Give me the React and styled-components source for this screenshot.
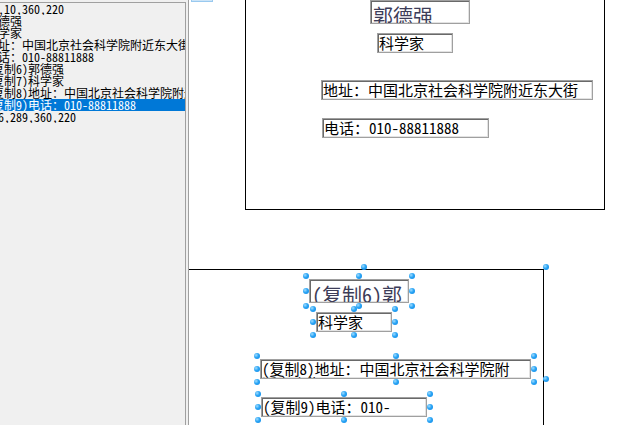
import React from 'react';
import styled, { createGlobalStyle } from 'styled-components';

const GlobalStyle = createGlobalStyle`
  html, body {
    margin: 0;
    padding: 0;
    height: 100%;
    overflow: hidden;
    background: #f0f0f0;
  }
  #root {
    height: 100%;
  }
`;

const FONT = `"Noto Sans Mono CJK SC", "Noto Sans CJK SC", sans-serif`;

// Layout shell
const Page = styled.div`
  display: flex;
  height: 100vh;
  font-family: ${FONT};
`;

const ListBox = styled.div`
  width: 186px;
  box-sizing: border-box;
  margin-top: 2px;
  background: #f0f0f0;
  border-top: 1px solid #a0a0a0;
  border-right: 1px solid #a0a0a0;
  overflow: hidden;
  flex-shrink: 0;
`;

const ListRow = styled.div`
  height: 12px;
  line-height: 12px;
  font-size: 12px;
  white-space: nowrap;
  overflow: hidden;
  text-indent: -14px;
  color: ${props => (props.$selected ? '#ffffff' : '#000000')};
  background: ${props => (props.$selected ? '#0078d7' : 'transparent')};
`;

const Splitter = styled.div`
  width: 3px;
  flex-shrink: 0;
  background: #f0f0f0;
  border-right: 1px solid #a0a0a0;
  box-sizing: border-box;
`;

const Canvas = styled.div`
  position: relative;
  flex: 1;
  background: #ffffff;
  overflow: hidden;
`;

// Leftover selection marker at the top edge of the design surface
const Marker = styled.div`
  position: absolute;
  left: 2px;
  top: -2px;
  width: 22px;
  height: 4px;
  box-sizing: border-box;
  background: #cce4f7;
  border: 1px solid #99c9ef;
`;

// Form copy on the design surface
const Frame = styled.div`
  position: absolute;
  left: ${props => props.$x}px;
  top: ${props => props.$y}px;
  width: 360px;
  height: 220px;
  box-sizing: border-box;
  border: 1px solid #000000;
`;

const FieldBox = styled.div`
  position: absolute;
  left: ${props => props.$x}px;
  top: ${props => props.$y}px;
  width: ${props => props.$w}px;
  height: ${props => props.$h}px;
`;

// label with word wrap: whatever does not fit drops to a hidden second line
const FieldText = styled.div`
  width: 100%;
  height: 100%;
  box-sizing: border-box;
  border: 1px solid #a0a0a0;
  box-shadow: inset 1px 1px 0 #696969, inset -1px -1px 0 #e3e3e3;
  padding: ${props => (props.$big ? '5px 4px 0 2px' : '1px 8px 0 1px')};
  font-size: ${props => (props.$big ? 20 : 15)}px;
  line-height: ${props => (props.$big ? 20 : 15)}px;
  color: ${props => (props.$big ? '#3d3d58' : '#000000')};
  overflow: hidden;
  word-break: normal;
`;

const spots = {
  tl: 'left: -6px; top: -6px;',
  t: 'left: calc(50% - 3px); top: -6px;',
  tr: 'right: -6px; top: -6px;',
  l: 'left: -6px; top: calc(50% - 3px);',
  r: 'right: -6px; top: calc(50% - 3px);',
  bl: 'left: -6px; bottom: -6px;',
  b: 'left: calc(50% - 3px); bottom: -6px;',
  br: 'right: -6px; bottom: -6px;',
};

const Handle = styled.span`
  position: absolute;
  width: 6px;
  height: 6px;
  border-radius: 50%;
  background: radial-gradient(circle at 35% 35%, #9fdcff 0%, #2aa4f4 45%, #0a86e6 100%);
  ${props => spots[props.$at]}
`;

function Handles() {
  return Object.keys(spots).map(k => <Handle key={k} $at={k} />);
}

const fields = [
  { key: 'name', x: 124, y: 9, w: 100, h: 24, big: true },
  { key: 'title', x: 131, y: 42, w: 76, h: 20 },
  { key: 'addr', x: 75, y: 89, w: 272, h: 20 },
  { key: 'tel', x: 76, y: 127, w: 167, h: 20 },
];

const original = {
  name: '郭德强',
  title: '科学家',
  addr: '地址：中国北京社会科学院附近东大街',
  tel: '电话：010-88811888',
};

const copies = {
  name: '(复制6)郭德强',
  title: '科学家',
  addr: '(复制8)地址：中国北京社会科学院附近东大街',
  tel: '(复制9)电话：010-\u200B88811888',
};

const copyWidths = { addr: 271, tel: 166 };

const listItems = [
  '56,10,360,220',
  '郭德强',
  '科学家',
  '地址：中国北京社会科学院附近东大街',
  '电话：010-88811888',
  '(复制6)郭德强',
  '(复制7)科学家',
  '(复制8)地址：中国北京社会科学院附近东大街',
  '(复制9)电话：010-88811888',
  '-56,289,360,220',
];

function FormCopy({ x, y, texts, selected, widths = {} }) {
  return (
    <Frame $x={x} $y={y}>
      {fields.map(f => (
        <FieldBox key={f.key} $x={f.x} $y={f.y} $w={widths[f.key] || f.w} $h={f.h}>
          <FieldText $big={f.big}>{texts[f.key]}</FieldText>
          {selected && <Handles />}
        </FieldBox>
      ))}
      {selected && <Handles />}
    </Frame>
  );
}

export default function App() {
  return (
    <>
      <GlobalStyle />
      <Page>
        <ListBox>
          {listItems.map((item, i) => (
            <ListRow key={i} $selected={i === 8}>{item}</ListRow>
          ))}
        </ListBox>
        <Splitter />
        <Canvas>
          <Marker />
          <FormCopy x={56} y={-10} texts={original} />
          <FormCopy x={-5} y={269} texts={copies} widths={copyWidths} selected />
        </Canvas>
      </Page>
    </>
  );
}
